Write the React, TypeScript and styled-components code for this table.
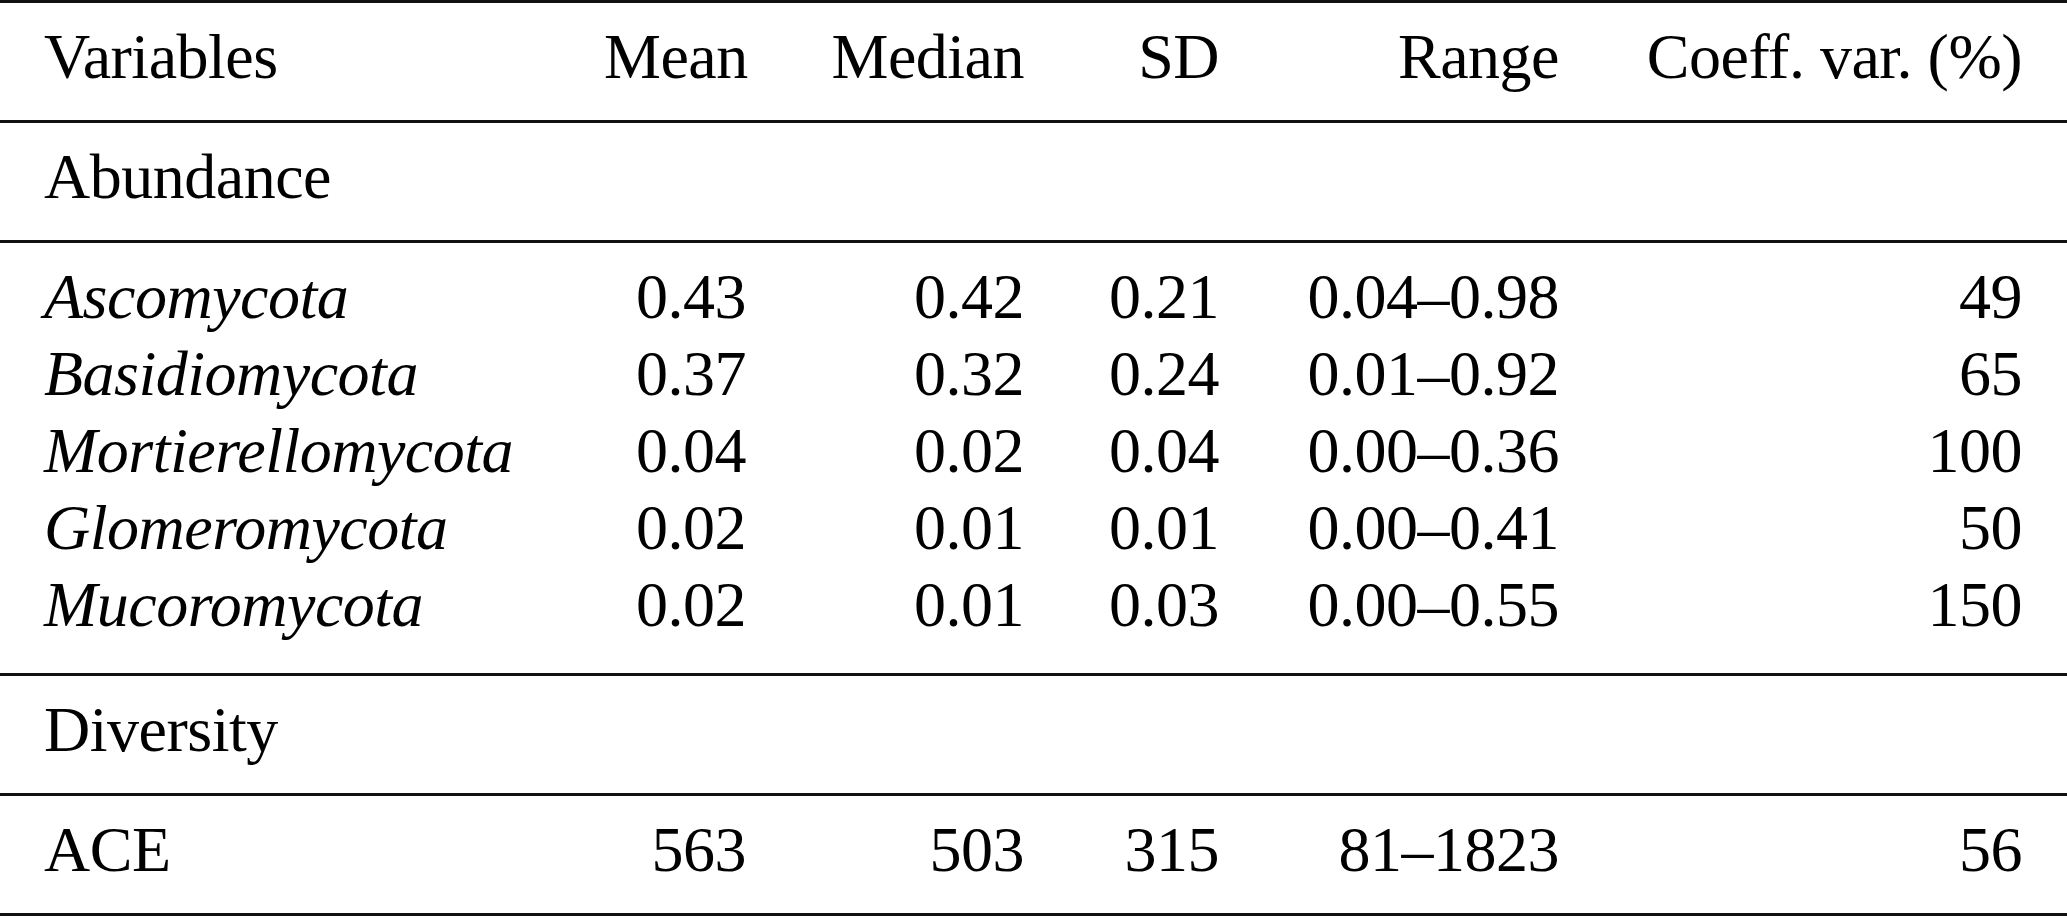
import styled, { createGlobalStyle } from 'styled-components';

const GlobalStyle = createGlobalStyle`
   html, body {
      margin: 0;
      padding: 0;
      background: #fff;
   }
`;

const Table = styled.div`
   width: 2067px;
   font-family: 'Liberation Serif', 'Times New Roman', serif;
   font-size: 64px;
   line-height: 77px;
   letter-spacing: -0.5px;
   color: #000;
   border-top: 3px solid #111;
`;

const Section = styled.div<{ $bottom?: number }>`
   padding: 15px 0 ${(p) => p.$bottom ?? 25}px;
   border-bottom: 3px solid #111;
`;

const Row = styled.div`
   display: grid;
   grid-template-columns: 560px 142px 278px 195px 340px 463px;
   padding: 0 45px 0 44px;
   white-space: nowrap;
`;

const Label = styled.div<{ $italic?: boolean }>`
   font-style: ${(p) => (p.$italic ? 'italic' : 'normal')};
`;

const Num = styled.div`
   text-align: right;
`;

type Stat = {
   name: string;
   mean: string;
   median: string;
   sd: string;
   range: string;
   cv: string;
};

const abundance: Stat[] = [
   { name: 'Ascomycota', mean: '0.43', median: '0.42', sd: '0.21', range: '0.04–0.98', cv: '49' },
   { name: 'Basidiomycota', mean: '0.37', median: '0.32', sd: '0.24', range: '0.01–0.92', cv: '65' },
   { name: 'Mortierellomycota', mean: '0.04', median: '0.02', sd: '0.04', range: '0.00–0.36', cv: '100' },
   { name: 'Glomeromycota', mean: '0.02', median: '0.01', sd: '0.01', range: '0.00–0.41', cv: '50' },
   { name: 'Mucoromycota', mean: '0.02', median: '0.01', sd: '0.03', range: '0.00–0.55', cv: '150' },
];

const ace: Stat = { name: 'ACE', mean: '563', median: '503', sd: '315', range: '81–1823', cv: '56' };

function StatRow({ stat, italic }: { stat: Stat; italic?: boolean }) {
   return (
      <Row>
         <Label $italic={italic}>{stat.name}</Label>
         <Num>{stat.mean}</Num>
         <Num>{stat.median}</Num>
         <Num>{stat.sd}</Num>
         <Num>{stat.range}</Num>
         <Num>{stat.cv}</Num>
      </Row>
   );
}

export default function App() {
   return (
      <>
         <GlobalStyle />
         <Table>
            <Section>
               <Row>
                  <Label>Variables</Label>
                  <Num>Mean</Num>
                  <Num>Median</Num>
                  <Num>SD</Num>
                  <Num>Range</Num>
                  <Num>Coeff. var. (%)</Num>
               </Row>
            </Section>
            <Section>
               <Row>
                  <Label>Abundance</Label>
               </Row>
            </Section>
            <Section $bottom={30}>
               {abundance.map((s) => (
                  <StatRow key={s.name} stat={s} italic />
               ))}
            </Section>
            <Section>
               <Row>
                  <Label>Diversity</Label>
               </Row>
            </Section>
            <Section>
               <StatRow stat={ace} />
            </Section>
         </Table>
      </>
   );
}
